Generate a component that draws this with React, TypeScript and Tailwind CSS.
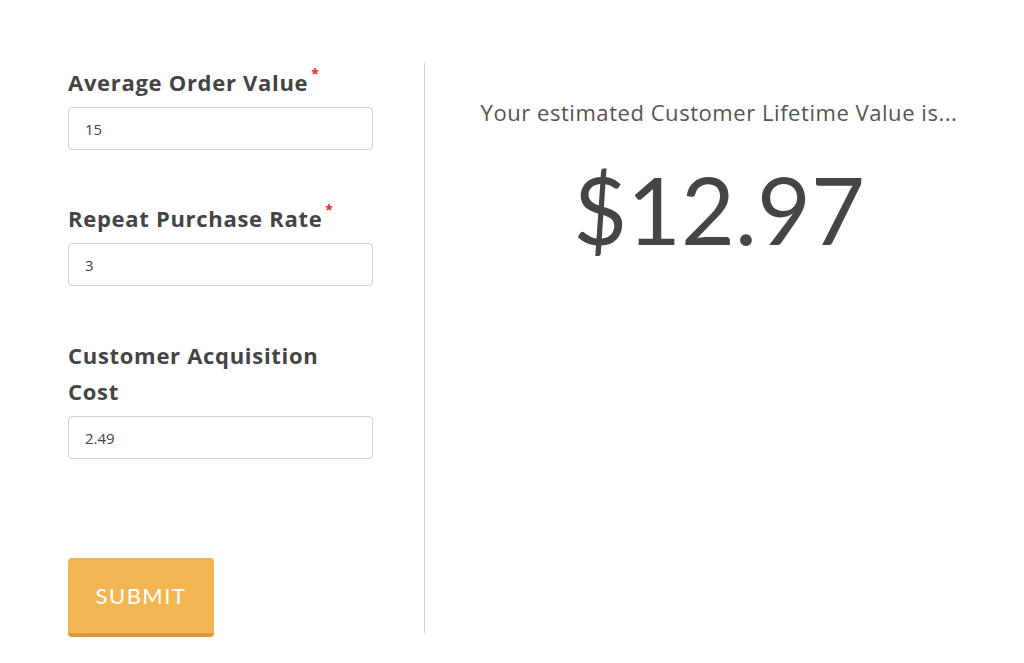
import React from "react";

const font = { fontFamily: "Lato, 'Open Sans', sans-serif" };
const labelFont = { fontFamily: "'Open Sans', Lato, sans-serif" };

function Field({ label, value, required }: { label: React.ReactNode; value: string; required?: boolean }) {
  return (
    <div className="flex flex-col">
      <label className="text-[22px] leading-[36px] font-bold text-[#444444] mb-[7px] tracking-[0.7px]" style={labelFont}>
        {label}
        {required && <span className="text-[#e8262a] text-[14px] align-top relative top-[-8px] ml-[3px]">*</span>}
      </label>
      <input
        readOnly
        value={value}
        className="w-[305px] h-[43px] border border-[#d0d0d0] rounded-[4px] pl-[16px] text-[15px] text-[#444444] bg-white outline-none"
        style={labelFont}
      />
    </div>
  );
}

export default function App() {
  return (
    <div className="w-[1024px] h-[663px] bg-white overflow-hidden" style={font}>
      <div className="flex items-start pt-[63px]">
        <div className="ml-[68px] w-[305px] flex flex-col">
          <div className="pt-[1px]">
            <Field label="Average Order Value" value="15" required />
          </div>
          <div className="mt-[50px]">
            <Field label="Repeat Purchase Rate" value="3" required />
          </div>
          <div className="mt-[51px]">
            <Field label={<>Customer Acquisition<br />Cost</>} value="2.49" />
          </div>
          <button className="mt-[99px] w-[146px] h-[79px] rounded-[4px] bg-[#f2b552] border-b-[4px] border-[#dd9a3c] text-white text-[22px] tracking-[1.5px]" style={font}>
            SUBMIT
          </button>
        </div>
        <div className="ml-[51px] w-px h-[570px] bg-[#cfcfcf]" />
        <div className="w-[588px] flex flex-col items-center pt-[33px] text-[#444444]">
          <div className="text-[22px] leading-[32px] font-normal text-[#555555] tracking-[0.55px]" style={labelFont}>Your estimated Customer Lifetime Value is...</div>
          <div className="text-[93px] leading-[110px] font-normal mt-[26px] text-[#454545]">$12.97</div>
        </div>
      </div>
    </div>
  );
}
